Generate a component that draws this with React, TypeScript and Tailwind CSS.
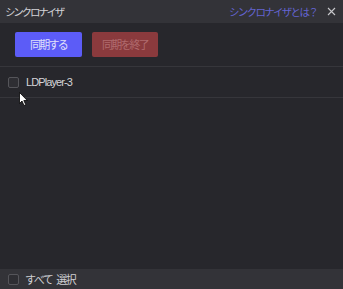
import React from "react";

const font = { fontFamily: '"Noto Sans CJK JP", "Noto Sans", sans-serif' };

export default function App() {
  return (
    <div className="relative w-[343px] h-[289px] bg-[#27272c] flex flex-col overflow-hidden" style={font}>
      <div className="h-[23px] bg-[#333338] flex items-center justify-between pl-[5px] pr-[7px] shrink-0">
        <span className="text-[10.5px] text-[#d4d4d8] tracking-[-2.2px]">シンクロナイザ</span>
        <div className="flex items-center gap-[10px]">
          <span className="text-[10.5px] text-[#6464d2] tracking-[-1.7px]">シンクロナイザとは？</span>
          <svg width="9" height="9" viewBox="0 0 9 9">
            <path d="M1 1 L8 8 M8 1 L1 8" stroke="#c8c8cc" strokeWidth="1.1" />
          </svg>
        </div>
      </div>
      <div className="flex gap-[10px] px-[15px] pt-[9px] pb-[9px] border-b border-[#36363b] shrink-0">
        <div className="w-[67px] h-[25px] rounded-[2px] bg-[#5c5cf7] flex items-center justify-center text-[11px] tracking-[-1.8px] text-[#e0e0fa]">同期する</div>
        <div className="w-[66px] h-[25px] rounded-[2px] bg-[#8a3a3d] flex items-center justify-center text-[11px] tracking-[-1.8px] text-[#b06a6d]">同期を終了</div>
      </div>
      <div className="h-[31px] flex items-center pl-[8px] gap-[7px] border-b border-[#36363b] shrink-0">
        <div className="w-[11px] h-[11px] rounded-[2px] border border-[#55555a] bg-[#2e2e33]" />
        <span className="text-[11px] text-[#d4d4d8] tracking-[-0.9px]" style={{ fontFamily: '"Liberation Sans", "Noto Sans CJK JP", sans-serif' }}>LDPlayer-3</span>
      </div>
      <div className="flex-1" />
      <div className="h-[20px] bg-[#333338] flex items-center pl-[8px] gap-[6px] shrink-0">
        <div className="w-[11px] h-[11px] rounded-[2px] border border-[#55555a] bg-[#2e2e33]" />
        <span className="text-[11px] text-[#cfcfd3] tracking-[-1.5px]">
          すべて<span className="inline-block w-[4px]"></span>選択
        </span>
      </div>
      <svg className="absolute left-[19px] top-[92px]" width="10" height="15" viewBox="0 0 10 15">
        <path d="M0.5 0.5 L0.5 11.5 L3 9 L5 13.5 L6.8 12.7 L4.8 8.5 L8.3 8.5 Z" fill="#ffffff" stroke="#000000" strokeWidth="0.8" strokeLinejoin="round" />
      </svg>
    </div>
  );
}
